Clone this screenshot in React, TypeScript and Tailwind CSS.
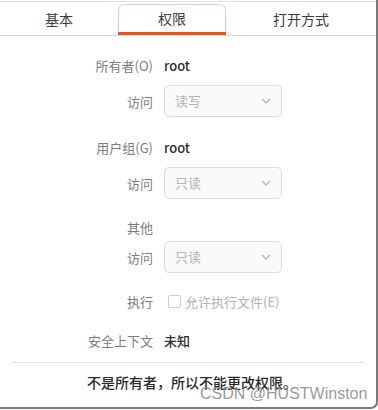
import React from "react";

const font = { fontFamily: '"Noto Sans CJK SC", "Noto Sans", sans-serif' };

function Chevron() {
  return (
    <svg width="10" height="6" viewBox="0 0 10 6" fill="none">
      <path d="M1 1 L5 5 L9 1" stroke="#b0b0b0" strokeWidth="1.2" />
    </svg>
  );
}

function Select({ value }: { value: string }) {
  return (
    <div className="w-[118px] h-[32px] rounded-[5px] border border-[#dcdcdc] bg-[#fafafa] flex items-center justify-between pl-[10px] pr-[10px]">
      <span className="text-[13px] text-[#b3b3b3]">{value}</span>
      <Chevron />
    </div>
  );
}

function Row({ label, children, className }: { label: string; children?: React.ReactNode; className?: string }) {
  return (
    <div className={"flex items-center " + (className ?? "")}>
      <div className="w-[153px] text-right text-[13px] text-[#7c7c7c] leading-none">{label}</div>
      <div className="ml-[11px] flex items-center">{children}</div>
    </div>
  );
}

export default function App() {
  return (
    <div style={font} className="relative w-[378px] h-[410px] bg-white overflow-hidden">
      <div className="w-[378px] h-[409px] border-r-2 border-b-2 border-[#7a7a7a] rounded-br-[7px] bg-white flex flex-col">
        {/* tab bar */}
        <div className="h-[35px] border-t border-[#dedede] mt-[1px] border-b border-b-[#d6d6d6] flex text-[14px] text-[#3c3c3c]">
          <div className="w-[118px] flex items-center justify-center pt-[1px]">基本</div>
          <div className="w-[108px] mt-[2px] rounded-t-[6px] border border-b-0 border-[#f6c4b4] flex flex-col">
            <div className="flex-1 flex items-center justify-center">权限</div>
            <div className="h-[3px] bg-[#e95420] -mx-[1px]"></div>
          </div>
          <div className="flex-1 flex items-center justify-center pt-[1px]">打开方式</div>
        </div>

        <Row label="所有者(O)" className="mt-[19px] h-[20px]">
          <span className="text-[13px] font-medium text-[#2e2e2e] leading-none">root</span>
        </Row>
        <Row label="访问" className="mt-[10px]">
          <Select value="读写" />
        </Row>
        <Row label="用户组(G)" className="mt-[20px] h-[20px]">
          <span className="text-[13px] font-medium text-[#2e2e2e] leading-none">root</span>
        </Row>
        <Row label="访问" className="mt-[10px]">
          <Select value="只读" />
        </Row>
        <Row label="其他" className="mt-[18px] h-[20px]" />
        <Row label="访问" className="mt-[4px]">
          <Select value="只读" />
        </Row>
        <Row label="执行" className="mt-[18px] h-[20px]">
          <div className="w-[13px] h-[13px] rounded-[2px] border border-[#cfcfcf] bg-white ml-[4px]"></div>
          <span className="ml-[4px] text-[13px] text-[#b0b0b0] leading-none">允许执行文件(E)</span>
        </Row>
        <Row label="安全上下文" className="mt-[19px] h-[20px]">
          <span className="text-[13px] font-medium text-[#2e2e2e] leading-none">未知</span>
        </Row>
        <div className="mt-[12px] mx-[11px] h-px bg-[#e4e4e4]"></div>
        <div className="mt-[10px] pl-[87px] text-[14px] font-medium text-[#2a2a2a] leading-[18px]">
          不是所有者，所以不能更改权限。
        </div>
      </div>
      <div
        className="absolute left-[200px] top-[384px] text-[16px] text-[#8c8c8c]/90 leading-[20px]"
        style={{ fontFamily: '"Liberation Sans", Arial, sans-serif' }}
      >
        CSDN @HUSTWinston
      </div>
    </div>
  );
}
